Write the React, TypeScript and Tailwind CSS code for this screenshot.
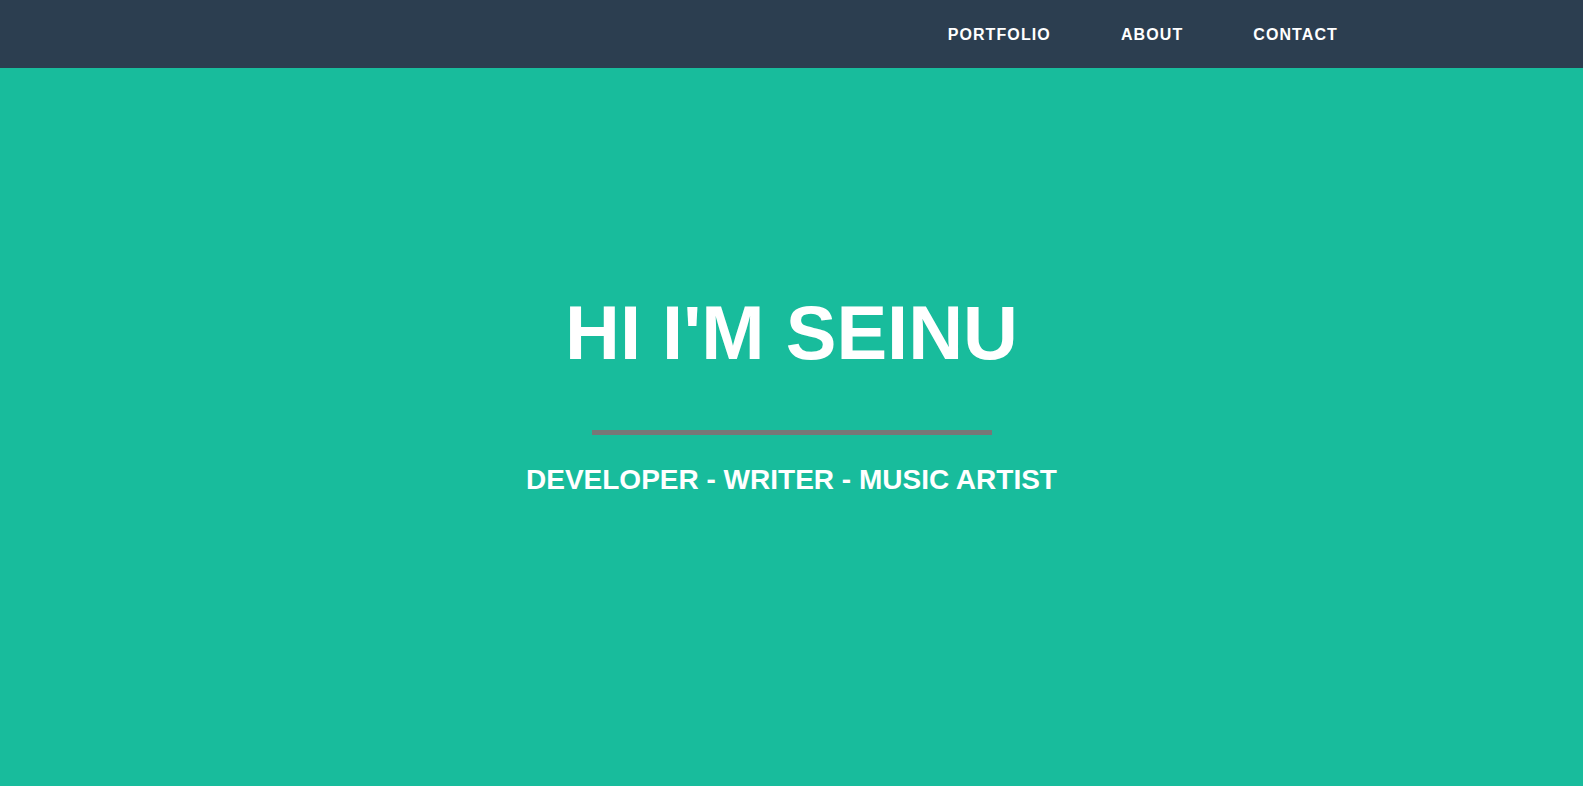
const navLinks = ["PORTFOLIO", "ABOUT", "CONTACT"];

function NavBar() {
  return (
    <nav className="h-[68px] bg-[#2c3e50] flex items-center justify-end pr-[245px] pt-[1px]">
      <ul className="flex items-center gap-[70px]">
        {navLinks.map((label) => (
          <li key={label}>
            <a
              href="#"
              className="text-[16px] font-bold tracking-[1.1px] text-white leading-none"
            >
              {label}
            </a>
          </li>
        ))}
      </ul>
    </nav>
  );
}

function Hero() {
  return (
    <header className="flex-1 bg-[#18bc9c] flex flex-col items-center pt-[227px] text-white">
      <h1 className="text-[76px] font-bold leading-none">HI I'M SEINU</h1>
      <hr className="mt-[59px] w-[400px] h-[5px] border-0 bg-[#777777]" />
      <p className="mt-[31px] text-[28px] font-bold leading-none">
        DEVELOPER - WRITER - MUSIC ARTIST
      </p>
    </header>
  );
}

export default function App() {
  return (
    <div
      className="min-h-[786px] flex flex-col"
      style={{ fontFamily: '"Liberation Sans", Arial, sans-serif' }}
    >
      <NavBar />
      <Hero />
    </div>
  );
}
